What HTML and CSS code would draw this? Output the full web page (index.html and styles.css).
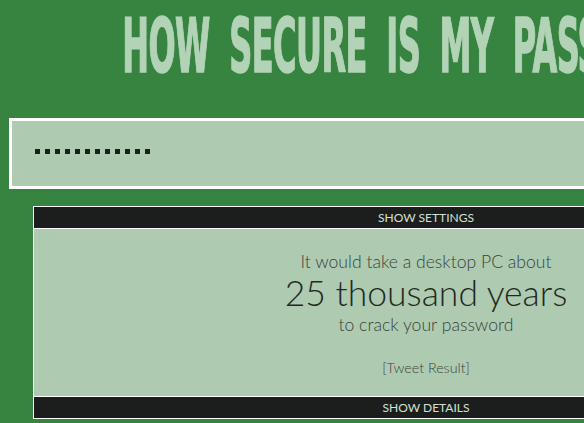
FILE: index.html
```html
<!DOCTYPE html>
<html lang="en">

<head>
    <title>How Secure Is My Password?</title>
    <link rel="stylesheet" href="styles.css">
</head>

<body>
    <div class="page">
        <h1 class="title"><span>HOW SECURE IS MY PASSWORD?</span></h1>
        <div class="password-box">
            <span class="dots"></span>
        </div>
        <div class="result">
            <div class="bar">SHOW SETTINGS</div>
            <div class="result-body">
                <p class="line-small">It would take a desktop PC about</p>
                <p class="line-big">25 thousand years</p>
                <p class="line-small">to crack your password</p>
                <p class="tweet">[Tweet Result]</p>
            </div>
            <div class="bar bar-bottom">SHOW DETAILS</div>
        </div>
    </div>
</body>

</html>
```

FILE: styles.css
```css
html, body {
    overflow: hidden;
}

body {
    margin: 0;
    background-color: #378441;
    font-family: Lato, "Open Sans", sans-serif;
}

.page {
    width: 834px;
    margin-left: 9px;
}

.title {
    margin: 0;
    height: 118px;
    display: flex;
    justify-content: center;
    font-family: "DejaVu Sans Condensed", "DejaVu Sans", sans-serif;
    font-weight: bold;
    font-size: 74px;
    line-height: 92px;
    color: #b3d3b7;
    white-space: nowrap;
}

.title span {
    display: block;
    flex-shrink: 0;
    letter-spacing: -1px;
    word-spacing: 18px;
    transform: scaleX(0.48);
    transform-origin: center;
    -webkit-text-stroke: 1.5px #b3d3b7;
}

.password-box {
    height: 65px;
    border: 3px solid #ffffff;
    background-color: #aecbb2;
    display: flex;
    align-items: center;
    padding-left: 23px;
}

.dots {
    width: 115px;
    height: 5px;
    margin-bottom: 4px;
    background: repeating-linear-gradient(to right, #1a201c 0 5px, transparent 5px 10px);
}

.result {
    margin: 17px 24px 0;
    border: 1px solid #ffffff;
    background-color: #aecbb2;
}

.bar {
    height: 21px;
    line-height: 21px;
    background-color: #1b1e1c;
    color: #d3e0d4;
    font-size: 12px;
    text-align: center;
    border-bottom: 1px solid #ffffff;
}

.bar-bottom {
    border-bottom: none;
    border-top: 1px solid #ffffff;
}

.result-body {
    height: 167px;
    padding-top: 22px;
    box-sizing: border-box;
    text-align: center;
    color: #37433a;
}

.result-body p {
    margin: 0;
}

.line-small {
    font-size: 17.6px;
    line-height: 21px;
    font-weight: 300;
}

.line-big {
    font-size: 35.5px;
    line-height: 42px;
    font-weight: 300;
    color: #1f2a22;
}

.result-body .tweet {
    margin-top: 24px;
    font-size: 14.3px;
    line-height: 17px;
    font-weight: 300;
}
```
